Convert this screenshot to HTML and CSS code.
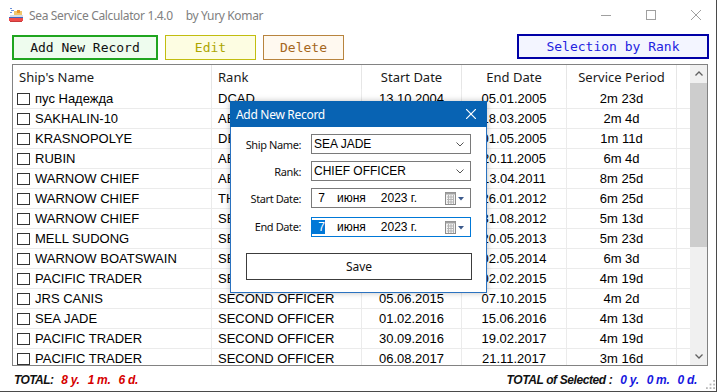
FILE: index.html
```html
<!DOCTYPE html>
<html lang="en">
<head>
    <meta charset="UTF-8">
    <meta name="viewport" content="width=device-width, initial-scale=1.0">
    <title>Sea Service Calculator</title>
    <link rel="stylesheet" href="styles.css">
</head>
<body>
    <div class="window">
        <div class="titlebar">
            <svg class="app-icon" viewBox="0 0 16 16">
                <rect x="2" y="1" width="2" height="1" fill="#6a8fd8"/>
                <rect x="3" y="3" width="3" height="1" fill="#6a8fd8"/>
                <rect x="2" y="5" width="2" height="1" fill="#6a8fd8"/>
                <rect x="6" y="4" width="8" height="5" fill="#f2c66a"/>
                <rect x="9" y="3" width="3" height="3" fill="#e8952a"/>
                <rect x="2" y="8" width="13" height="2" fill="#d8dde6"/>
                <rect x="1" y="10" width="14" height="1" fill="#3b66c4"/>
                <rect x="1" y="11" width="14" height="3" fill="#ee4c4c"/>
                <rect x="2" y="14" width="12" height="1" fill="#c73a3a"/>
            </svg>
            <span class="title">Sea Service Calculator 1.4.0</span>
            <span class="author">by Yury Komar</span>
            <div class="controls">
                <svg viewBox="0 0 10 10"><line x1="0" y1="5.5" x2="10" y2="5.5"/></svg>
                <svg viewBox="0 0 10 10"><rect x="0.5" y="0.5" width="9" height="9" fill="none"/></svg>
                <svg viewBox="0 0 10 10"><line x1="0" y1="0" x2="10" y2="10"/><line x1="10" y1="0" x2="0" y2="10"/></svg>
            </div>
        </div>

        <div class="toolbar">
            <button class="btn btn-add">Add New Record</button>
            <button class="btn btn-edit">Edit</button>
            <button class="btn btn-delete">Delete</button>
            <button class="btn btn-rank">Selection by Rank</button>
        </div>

        <div class="grid-box">
            <div class="grid">
                <div class="row head">
                    <div class="cell name">Ship's Name</div>
                    <div class="cell rank">Rank</div>
                    <div class="cell date">Start Date</div>
                    <div class="cell date">End Date</div>
                    <div class="cell period">Service Period</div>
                    <div class="cell filler"></div>
                </div>
                <div class="row">
                    <div class="cell name"><span class="check"></span>пус Надежда</div>
                    <div class="cell rank">DCAD</div>
                    <div class="cell date">13.10.2004</div>
                    <div class="cell date">05.01.2005</div>
                    <div class="cell period">2m 23d</div>
                    <div class="cell filler"></div>
                </div>
                <div class="row">
                    <div class="cell name"><span class="check"></span>SAKHALIN-10</div>
                    <div class="cell rank">AB</div>
                    <div class="cell date">14.01.2005</div>
                    <div class="cell date">18.03.2005</div>
                    <div class="cell period">2m 4d</div>
                    <div class="cell filler"></div>
                </div>
                <div class="row">
                    <div class="cell name"><span class="check"></span>KRASNOPOLYE</div>
                    <div class="cell rank">DECK CADET</div>
                    <div class="cell date">20.03.2005</div>
                    <div class="cell date">01.05.2005</div>
                    <div class="cell period">1m 11d</div>
                    <div class="cell filler"></div>
                </div>
                <div class="row">
                    <div class="cell name"><span class="check"></span>RUBIN</div>
                    <div class="cell rank">AB</div>
                    <div class="cell date">16.05.2005</div>
                    <div class="cell date">20.11.2005</div>
                    <div class="cell period">6m 4d</div>
                    <div class="cell filler"></div>
                </div>
                <div class="row">
                    <div class="cell name"><span class="check"></span>WARNOW CHIEF</div>
                    <div class="cell rank">AB</div>
                    <div class="cell date">19.07.2010</div>
                    <div class="cell date">13.04.2011</div>
                    <div class="cell period">8m 25d</div>
                    <div class="cell filler"></div>
                </div>
                <div class="row">
                    <div class="cell name"><span class="check"></span>WARNOW CHIEF</div>
                    <div class="cell rank">THIRD OFFICER</div>
                    <div class="cell date">01.07.2011</div>
                    <div class="cell date">26.01.2012</div>
                    <div class="cell period">6m 25d</div>
                    <div class="cell filler"></div>
                </div>
                <div class="row">
                    <div class="cell name"><span class="check"></span>WARNOW CHIEF</div>
                    <div class="cell rank">SECOND OFFICER</div>
                    <div class="cell date">18.03.2012</div>
                    <div class="cell date">31.08.2012</div>
                    <div class="cell period">5m 13d</div>
                    <div class="cell filler"></div>
                </div>
                <div class="row">
                    <div class="cell name"><span class="check"></span>MELL SUDONG</div>
                    <div class="cell rank">SECOND OFFICER</div>
                    <div class="cell date">27.11.2012</div>
                    <div class="cell date">20.05.2013</div>
                    <div class="cell period">5m 23d</div>
                    <div class="cell filler"></div>
                </div>
                <div class="row">
                    <div class="cell name"><span class="check"></span>WARNOW BOATSWAIN</div>
                    <div class="cell rank">SECOND OFFICER</div>
                    <div class="cell date">30.10.2013</div>
                    <div class="cell date">02.05.2014</div>
                    <div class="cell period">6m 3d</div>
                    <div class="cell filler"></div>
                </div>
                <div class="row">
                    <div class="cell name"><span class="check"></span>PACIFIC TRADER</div>
                    <div class="cell rank">SECOND OFFICER</div>
                    <div class="cell date">14.09.2014</div>
                    <div class="cell date">02.02.2015</div>
                    <div class="cell period">4m 19d</div>
                    <div class="cell filler"></div>
                </div>
                <div class="row">
                    <div class="cell name"><span class="check"></span>JRS CANIS</div>
                    <div class="cell rank">SECOND OFFICER</div>
                    <div class="cell date">05.06.2015</div>
                    <div class="cell date">07.10.2015</div>
                    <div class="cell period">4m 2d</div>
                    <div class="cell filler"></div>
                </div>
                <div class="row">
                    <div class="cell name"><span class="check"></span>SEA JADE</div>
                    <div class="cell rank">SECOND OFFICER</div>
                    <div class="cell date">01.02.2016</div>
                    <div class="cell date">15.06.2016</div>
                    <div class="cell period">4m 13d</div>
                    <div class="cell filler"></div>
                </div>
                <div class="row">
                    <div class="cell name"><span class="check"></span>PACIFIC TRADER</div>
                    <div class="cell rank">SECOND OFFICER</div>
                    <div class="cell date">30.09.2016</div>
                    <div class="cell date">19.02.2017</div>
                    <div class="cell period">4m 19d</div>
                    <div class="cell filler"></div>
                </div>
                <div class="row">
                    <div class="cell name"><span class="check"></span>PACIFIC TRADER</div>
                    <div class="cell rank">SECOND OFFICER</div>
                    <div class="cell date">06.08.2017</div>
                    <div class="cell date">21.11.2017</div>
                    <div class="cell period">3m 16d</div>
                    <div class="cell filler"></div>
                </div>
            </div>
            <div class="scrollbar">
                <div class="arrow">
                    <svg viewBox="0 0 8 5"><polyline points="0.5,4.5 4,1 7.5,4.5"/></svg>
                </div>
                <div class="thumb"></div>
                <div class="track"></div>
                <div class="arrow">
                    <svg viewBox="0 0 8 5"><polyline points="0.5,0.5 4,4 7.5,0.5"/></svg>
                </div>
            </div>
        </div>

        <div class="footer">
            <span class="total-label">TOTAL:</span>
            <span class="total-value red"><span>8 y.</span><span>1 m.</span><span>6 d.</span></span>
            <span class="total-label selected">TOTAL of Selected :</span>
            <span class="total-value blue"><span>0 y.</span><span>0 m.</span><span>0 d.</span></span>
            <svg class="grip" viewBox="0 0 10 10">
                <rect x="8" y="0" width="2" height="2"/>
                <rect x="4" y="4" width="2" height="2"/>
                <rect x="8" y="4" width="2" height="2"/>
                <rect x="0" y="8" width="2" height="2"/>
                <rect x="4" y="8" width="2" height="2"/>
                <rect x="8" y="8" width="2" height="2"/>
            </svg>
        </div>

        <!-- modal dialog on top of the grid -->
        <div class="dialog">
            <div class="dialog-title">
                <span>Add New Record</span>
                <svg class="dialog-close" viewBox="0 0 10 10"><line x1="0" y1="0" x2="10" y2="10"/><line x1="10" y1="0" x2="0" y2="10"/></svg>
            </div>
            <div class="dialog-body">
                <div class="form">
                    <label>Ship Name:</label>
                    <div class="field combo">
                        <span>SEA JADE</span>
                        <svg class="chevron" viewBox="0 0 8 5"><polyline points="0.5,0.5 4,4 7.5,0.5"/></svg>
                    </div>
                    <label>Rank:</label>
                    <div class="field combo">
                        <span>CHIEF OFFICER</span>
                        <svg class="chevron" viewBox="0 0 8 5"><polyline points="0.5,0.5 4,4 7.5,0.5"/></svg>
                    </div>
                    <label>Start Date:</label>
                    <div class="field datefield">
                        <span class="day">7</span>
                        <span class="month">июня</span>
                        <span class="year">2023 г.</span>
                        <svg class="calendar" viewBox="0 0 20 13">
                            <rect x="0.5" y="0.5" width="10" height="12" fill="#f4f4f4" stroke="#8c8c8c"/>
                            <rect x="0.5" y="0.5" width="10" height="2" fill="#a0a0a0"/>
                            <path d="M2 5h7M2 7.5h7M2 10h7M3.5 3v9M6 3v9M8.5 3v9" stroke="#b4b4b4" stroke-width="1"/>
                            <polygon points="13,5 19,5 16,8.5" fill="#3c5a8c"/>
                        </svg>
                    </div>
                    <label class="gap">End Date:</label>
                    <div class="field datefield focused gap">
                        <span class="day selected-day">7</span>
                        <span class="month">июня</span>
                        <span class="year">2023 г.</span>
                        <svg class="calendar" viewBox="0 0 20 13">
                            <rect x="0.5" y="0.5" width="10" height="12" fill="#f4f4f4" stroke="#8c8c8c"/>
                            <rect x="0.5" y="0.5" width="10" height="2" fill="#a0a0a0"/>
                            <path d="M2 5h7M2 7.5h7M2 10h7M3.5 3v9M6 3v9M8.5 3v9" stroke="#b4b4b4" stroke-width="1"/>
                            <polygon points="13,5 19,5 16,8.5" fill="#3c5a8c"/>
                        </svg>
                    </div>
                </div>
                <button class="save">Save</button>
            </div>
        </div>
    </div>
</body>
</html>
```

FILE: styles.css
```css
body {
    margin: 0;
    background-color: #fff;
    font-family: "Liberation Sans", Arial, sans-serif;
}

.window {
    position: relative;
    width: 716px;
    height: 391px;
    border-right: 1px solid #4a4a4a;
    border-bottom: 1px solid #4a4a4a;
    background-color: #fff;
    display: flex;
    flex-direction: column;
    overflow: hidden;
}

/* title bar */
.titlebar {
    height: 30px;
    flex: none;
    display: flex;
    align-items: center;
    padding-left: 8px;
    font-family: "Noto Sans", sans-serif;
    font-size: 12px;
    letter-spacing: -0.35px;
    color: #808080;
}

.app-icon {
    width: 16px;
    height: 16px;
    margin-right: 5px;
}

.author {
    margin-left: 13px;
}

.controls {
    margin-left: auto;
    display: flex;
    gap: 35px;
    padding-right: 15px;
}

.controls svg {
    width: 10px;
    height: 10px;
    stroke: #a0a0a0;
    stroke-width: 1;
    overflow: visible;
}

/* toolbar buttons */
.toolbar {
    flex: none;
    display: flex;
    align-items: flex-start;
    gap: 7px;
    padding: 5px 7px 0 12px;
    height: 34px;
    box-sizing: border-box;
}

.btn {
    box-sizing: border-box;
    height: 25px;
    padding: 0;
    font-family: "DejaVu Sans Mono", monospace;
    font-size: 13px;
    cursor: pointer;
}

.btn-add {
    width: 146px;
    border: 2px solid #1fa51f;
    background-color: #eefcee;
    color: #111;
}

.btn-edit {
    width: 91px;
    border: 1px solid #c2bd10;
    background-color: #fdfde2;
    color: #ada600;
}

.btn-delete {
    width: 81px;
    border: 1px solid #b8843e;
    background-color: #fff9f0;
    color: #a5661c;
}

.btn-rank {
    width: 192px;
    margin-left: auto;
    margin-top: -1px;
    border: 2px solid #0000a6;
    background-color: #f3f5ff;
    color: #2323e0;
}

/* data grid */
.grid-box {
    flex: none;
    height: 302px;
    margin: 0 8px 0 12px;
    border: 1px solid #828282;
    box-sizing: border-box;
    display: flex;
    overflow: hidden;
}

.grid {
    flex: 1;
    overflow: hidden;
}

.row {
    display: grid;
    grid-template-columns: 199px 150px 100px 105px 110px 1fr;
    height: 20px;
    font-size: 13px;
    color: #000;
}

.row.head {
    height: 24px;
    font-family: "Noto Sans", sans-serif;
    font-size: 13px;
    color: #1a1a1a;
}

.cell {
    display: flex;
    align-items: center;
    border-right: 1px solid #ebebeb;
    border-bottom: 1px solid #ebebeb;
    white-space: nowrap;
    overflow: hidden;
}

.head .cell {
    border-bottom: none;
    border-right-color: #e6e6e6;
}

.cell.name {
    padding-left: 4px;
}

.head .cell.name {
    padding-left: 6px;
}

.cell.rank {
    padding-left: 6px;
}

.cell.date,
.cell.period {
    justify-content: center;
}

.cell.filler {
    border-right: none;
}

.check {
    width: 13px;
    height: 12px;
    box-sizing: border-box;
    border: 1px solid #333;
    background-color: #fff;
    margin-right: 5px;
    flex: none;
}

.scrollbar {
    width: 17px;
    flex: none;
    display: flex;
    flex-direction: column;
    background-color: #f0f0f0;
}

.scrollbar .arrow {
    height: 17px;
    display: flex;
    align-items: center;
    justify-content: center;
}

.scrollbar .arrow svg {
    width: 8px;
    height: 5px;
    fill: none;
    stroke: #606060;
    stroke-width: 1.3;
}

.scrollbar .thumb {
    height: 164px;
    margin-top: 1px;
    background-color: #cdcdcd;
}

.scrollbar .track {
    flex: 1;
}

/* footer totals */
.footer {
    flex: 1;
    display: flex;
    align-items: center;
    padding: 2px 0 0 14px;
    font-size: 12px;
    font-weight: bold;
    font-style: italic;
    position: relative;
}

.total-label {
    color: #111;
    letter-spacing: -0.6px;
    margin-right: 8px;
}

.total-label.selected {
    margin-left: auto;
    margin-right: 8px;
    letter-spacing: -0.4px;
}

.total-value {
    display: flex;
    gap: 8px;
    letter-spacing: -0.3px;
}

.total-value.red {
    color: #d60000;
}

.total-value.blue {
    color: #1717e0;
    margin-right: 19px;
}

.grip {
    position: absolute;
    right: 1px;
    bottom: 2px;
    width: 9px;
    height: 9px;
    fill: #b8b8b8;
}

/* dialog */
.dialog {
    position: absolute;
    left: 230px;
    top: 101px;
    width: 257px;
    height: 192px;
    box-sizing: border-box;
    border: 1px solid #2a72c0;
    border-top: none;
    background-color: #fff;
    box-shadow: 0 0 6px rgba(0, 0, 0, 0.25);
}

.dialog-title {
    height: 26px;
    margin: 0 -1px;
    background-color: #0863b3;
    color: #fff;
    display: flex;
    align-items: center;
    padding: 0 11px 0 6px;
    font-family: "Noto Sans", sans-serif;
    font-size: 12px;
    letter-spacing: -0.3px;
}

.dialog-close {
    margin-left: auto;
    width: 10px;
    height: 10px;
    stroke: #fff;
    stroke-width: 1.2;
}

.dialog-body {
    padding: 7px 15px 0 15px;
}

.form {
    display: grid;
    grid-template-columns: 55px 160px;
    grid-auto-rows: 20px;
    column-gap: 10px;
    row-gap: 7px;
}

.form label {
    display: flex;
    align-items: center;
    justify-content: flex-end;
    font-family: "Noto Sans", sans-serif;
    font-size: 11px;
    letter-spacing: -0.4px;
    color: #111;
    white-space: nowrap;
}

.form .gap {
    margin-top: 2px;
}

.field {
    box-sizing: border-box;
    height: 20px;
    border: 1px solid #7a7a7a;
    display: flex;
    align-items: center;
    font-size: 12px;
    color: #000;
    padding-left: 2px;
}

.combo .chevron {
    margin-left: auto;
    margin-right: 6px;
    width: 8px;
    height: 5px;
    fill: none;
    stroke: #555;
    stroke-width: 1;
}

.datefield {
    padding-left: 0;
}

.datefield .day {
    display: inline-block;
    width: 13px;
    text-align: right;
    height: 14px;
    line-height: 14px;
}

.datefield .month {
    margin-left: 12px;
}

.datefield .year {
    margin-left: 15px;
}

.datefield .calendar {
    margin-left: auto;
    margin-right: 5px;
    width: 20px;
    height: 13px;
}

.field.focused {
    border-color: #0078d7;
}

.selected-day {
    background-color: #0078d7;
    color: #fff;
}

.save {
    display: block;
    margin-top: 18px;
    width: 226px;
    height: 27px;
    border: 1px solid #3c3c3c;
    background-color: #fff;
    font-family: "Noto Sans", sans-serif;
    font-size: 12px;
    color: #111;
}
```
